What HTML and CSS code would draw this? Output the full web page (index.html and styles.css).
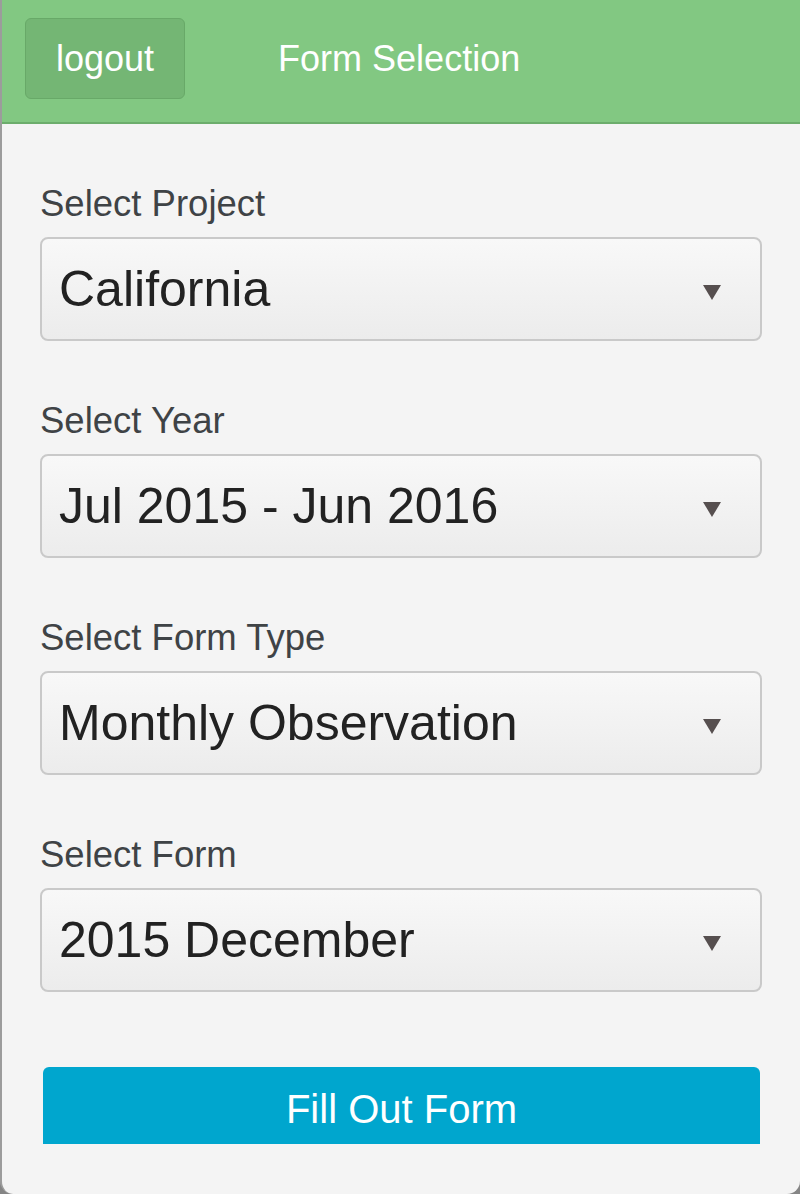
FILE: index.html
```html
<!DOCTYPE html>
<html>

<head>
    <meta charset="utf-8">
    <title>Form Selection</title>
    <meta name="viewport" content="width=device-width, initial-scale=1">
    <link rel="stylesheet" href="styles.css">
</head>

<body>
    <div id="app-window">
        <div id="top-bar">
            <button id="logout-button">logout</button>
            <h1 id="page-title">Form Selection</h1>
        </div>
        <form id="form-select">
            <div class="field">
                <label for="project">Select Project</label>
                <div class="select-wrap">
                    <select id="project">
                        <option>California</option>
                    </select>
                </div>
            </div>
            <div class="field">
                <label for="year">Select Year</label>
                <div class="select-wrap">
                    <select id="year">
                        <option>Jul 2015 - Jun 2016</option>
                    </select>
                </div>
            </div>
            <div class="field">
                <label for="form-type">Select Form Type</label>
                <div class="select-wrap">
                    <select id="form-type">
                        <option>Monthly Observation</option>
                    </select>
                </div>
            </div>
            <div class="field">
                <label for="form">Select Form</label>
                <div class="select-wrap">
                    <select id="form">
                        <option>2015 December</option>
                    </select>
                </div>
            </div>
            <button id="fill-button">Fill Out Form</button>
        </form>
    </div>
</body>

</html>
```

FILE: styles.css
```css
html, body {
    margin: 0;
    height: 100%;
}

body {
    background-color: #858585;
    font-family: 'Liberation Sans', Arial, sans-serif;
}

#app-window {
    box-sizing: border-box;
    height: 1194px;
    background-color: #f4f4f4;
    border-left: 2px solid #9c9c9c;
    border-radius: 0 0 13px 13px;
    overflow: hidden;
}

#top-bar {
    display: flex;
    align-items: flex-start;
    height: 104px;
    padding: 18px 0 0 23px;
    background-color: #82c882;
    border-bottom: 2px solid #6cad6c;
}

#logout-button {
    height: 81px;
    padding: 0 30px;
    background-color: #74b674;
    border: 1px solid #68a968;
    border-radius: 6px;
    color: white;
    font-family: 'Liberation Sans', Arial, sans-serif;
    font-size: 36px;
    line-height: 79px;
}

#page-title {
    margin: 0 0 0 93px;
    font-size: 36px;
    font-weight: normal;
    line-height: 81px;
    color: white;
}

#form-select {
    display: flex;
    flex-direction: column;
    padding: 58px 38px 0 38px;
}

.field {
    display: flex;
    flex-direction: column;
    gap: 12px;
    margin-bottom: 58px;
}

.field>label {
    font-size: 36.5px;
    line-height: 43px;
    color: #3f4346;
}

.select-wrap {
    position: relative;
}

/* little dropdown triangle */
.select-wrap::after {
    content: "";
    position: absolute;
    top: 48px;
    right: 41px;
    border-left: 9px solid transparent;
    border-right: 9px solid transparent;
    border-top: 15px solid #564f4f;
    pointer-events: none;
}

.select-wrap>select {
    appearance: none;
    -webkit-appearance: none;
    box-sizing: border-box;
    width: 100%;
    height: 104px;
    margin: 0;
    padding: 0 60px 0 17px;
    background: linear-gradient(#f8f8f8, #ececec);
    border: 2px solid #c9c9c9;
    border-radius: 8px;
    font-family: 'Liberation Sans', Arial, sans-serif;
    font-size: 50px;
    color: #222;
    outline: none;
}

#fill-button {
    height: 77px;
    margin: 17px 2px 0 3px;
    padding-top: 8px;
    background-color: #00a6ce;
    border: none;
    border-radius: 6px 6px 0 0;
    color: white;
    font-family: 'Liberation Sans', Arial, sans-serif;
    font-size: 40px;
}
```
